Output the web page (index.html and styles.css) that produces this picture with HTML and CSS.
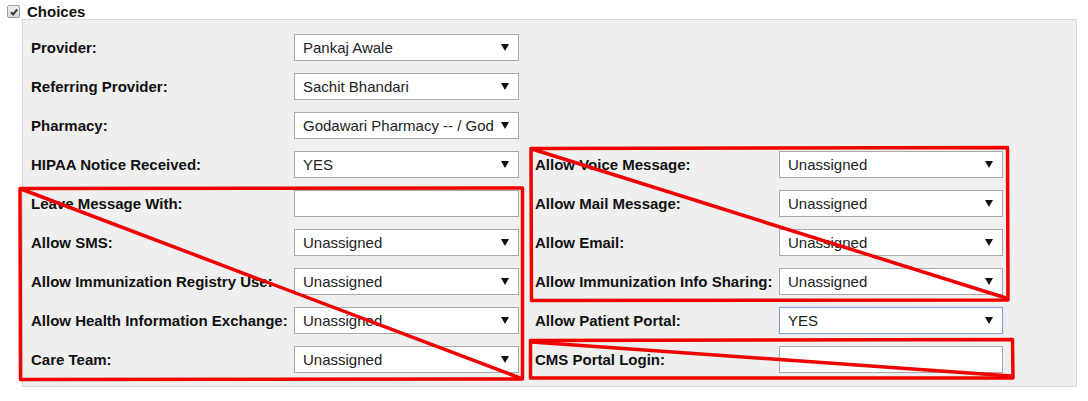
FILE: index.html
```html
<!DOCTYPE html>
<html>
<head>
<meta charset="utf-8">
<link rel="stylesheet" href="styles.css">
</head>
<body>
<div class="page">
  <div class="header">
    <span class="cb"><svg width="10" height="10" viewBox="0 0 10 10"><path d="M2 5.2 L4.1 7.4 L8.2 2.4" fill="none" stroke="#3c3c3c" stroke-width="2"/></svg></span>
    <span class="title">Choices</span>
  </div>
  <div class="panel">
    <div class="grid">
      <div class="label">Provider:</div>
      <div class="sel"><span class="val">Pankaj Awale</span><svg class="arr" width="8" height="7" viewBox="0 0 8 7"><path d="M0 0 H8 L4 7 Z" fill="#111"/></svg></div>
      <div class="label right"></div>
      <div class="empty"></div>

      <div class="label">Referring Provider:</div>
      <div class="sel"><span class="val">Sachit Bhandari</span><svg class="arr" width="8" height="7" viewBox="0 0 8 7"><path d="M0 0 H8 L4 7 Z" fill="#111"/></svg></div>
      <div class="label right"></div>
      <div class="empty"></div>

      <div class="label">Pharmacy:</div>
      <div class="sel"><span class="val">Godawari Pharmacy -- / God</span><svg class="arr" width="8" height="7" viewBox="0 0 8 7"><path d="M0 0 H8 L4 7 Z" fill="#111"/></svg></div>
      <div class="label right"></div>
      <div class="empty"></div>

      <div class="label">HIPAA Notice Received:</div>
      <div class="sel"><span class="val">YES</span><svg class="arr" width="8" height="7" viewBox="0 0 8 7"><path d="M0 0 H8 L4 7 Z" fill="#111"/></svg></div>
      <div class="label right">Allow Voice Message:</div>
      <div class="sel"><span class="val">Unassigned</span><svg class="arr" width="8" height="7" viewBox="0 0 8 7"><path d="M0 0 H8 L4 7 Z" fill="#111"/></svg></div>

      <div class="label">Leave Message With:</div>
      <div class="txt"></div>
      <div class="label right">Allow Mail Message:</div>
      <div class="sel"><span class="val">Unassigned</span><svg class="arr" width="8" height="7" viewBox="0 0 8 7"><path d="M0 0 H8 L4 7 Z" fill="#111"/></svg></div>

      <div class="label">Allow SMS:</div>
      <div class="sel"><span class="val">Unassigned</span><svg class="arr" width="8" height="7" viewBox="0 0 8 7"><path d="M0 0 H8 L4 7 Z" fill="#111"/></svg></div>
      <div class="label right">Allow Email:</div>
      <div class="sel"><span class="val">Unassigned</span><svg class="arr" width="8" height="7" viewBox="0 0 8 7"><path d="M0 0 H8 L4 7 Z" fill="#111"/></svg></div>

      <div class="label">Allow Immunization Registry Use:</div>
      <div class="sel"><span class="val">Unassigned</span><svg class="arr" width="8" height="7" viewBox="0 0 8 7"><path d="M0 0 H8 L4 7 Z" fill="#111"/></svg></div>
      <div class="label right">Allow Immunization Info Sharing:</div>
      <div class="sel"><span class="val">Unassigned</span><svg class="arr" width="8" height="7" viewBox="0 0 8 7"><path d="M0 0 H8 L4 7 Z" fill="#111"/></svg></div>

      <div class="label">Allow Health Information Exchange:</div>
      <div class="sel"><span class="val">Unassigned</span><svg class="arr" width="8" height="7" viewBox="0 0 8 7"><path d="M0 0 H8 L4 7 Z" fill="#111"/></svg></div>
      <div class="label right">Allow Patient Portal:</div>
      <div class="sel focus"><span class="val">YES</span><svg class="arr" width="8" height="7" viewBox="0 0 8 7"><path d="M0 0 H8 L4 7 Z" fill="#111"/></svg></div>

      <div class="label">Care Team:</div>
      <div class="sel"><span class="val">Unassigned</span><svg class="arr" width="8" height="7" viewBox="0 0 8 7"><path d="M0 0 H8 L4 7 Z" fill="#111"/></svg></div>
      <div class="label right">CMS Portal Login:</div>
      <div class="txt"></div>
    </div>
  </div>
  <svg class="marks" width="1088" height="401" viewBox="0 0 1088 401">
    <g fill="none" stroke="#f20000" stroke-width="3.5" stroke-linejoin="round" stroke-linecap="round">
      <path d="M20 188.5 L522.5 188 L522.5 379 L20.5 379.5 Z"/>
      <path d="M21 189 L520 378"/>
      <path d="M531 148.5 L1007.5 147.5 L1008 300 L531.5 300.5 Z"/>
      <path d="M532 149 L1006 298"/>
      <path d="M530.5 340.5 L1012.5 339.5 L1013 378 L530.5 378 Z"/>
      <path d="M532 342 L1011 376"/>
    </g>
  </svg>
</div>
</body>
</html>
```

FILE: styles.css
```css
html, body {
  margin: 0;
  padding: 0;
  background: #ffffff;
}

.page {
  position: relative;
  width: 1088px;
  height: 401px;
  font-family: "Liberation Sans", Arial, sans-serif;
  font-size: 15px;
  color: #000;
}

.header {
  display: flex;
  align-items: flex-start;
  height: 19px;
  box-sizing: border-box;
  padding-top: 4px;
  line-height: 16px;
}

.cb {
  display: flex;
  align-items: center;
  justify-content: center;
  width: 11px;
  height: 11px;
  margin-left: 7px;
  margin-top: 1px;
  border: 1px solid #9d9d9d;
  border-radius: 2px;
  background: linear-gradient(#f2f2f2, #d6d6d6);
}

.title {
  margin-left: 7px;
  font-weight: bold;
  color: #111;
}

.panel {
  margin-left: 22px;
  width: 1055px;
  box-sizing: border-box;
  border: 1px solid #d6d6d6;
  background: #efefef;
  padding: 14px 0 13px 8px;
}

.grid {
  display: grid;
  grid-template-columns: 263px 225px 260px 224px;
  grid-auto-rows: 27px;
  row-gap: 12px;
}

.label {
  display: flex;
  align-items: center;
  padding-top: 1px;
  box-sizing: border-box;
  font-weight: bold;
  line-height: 16px;
  white-space: nowrap;
  color: #111;
}

.label.right {
  padding-left: 16px;
}

.sel, .txt {
  box-sizing: border-box;
  height: 27px;
  border: 1px solid #a9a9a9;
  background: #fff;
}

.sel {
  display: flex;
  align-items: center;
  justify-content: space-between;
  padding: 0 8px 0 8px;
  line-height: 16px;
  color: #222;
  white-space: nowrap;
  overflow: hidden;
}

.sel .val {
  overflow: hidden;
}

.sel .arr {
  flex: none;
  margin-left: 4px;
  margin-right: 1px;
}

.sel.focus {
  border-color: #7ea4d6;
  box-shadow: 0 0 1px #a8c4e8;
}

.marks {
  position: absolute;
  left: 0;
  top: 0;
  pointer-events: none;
}
```
